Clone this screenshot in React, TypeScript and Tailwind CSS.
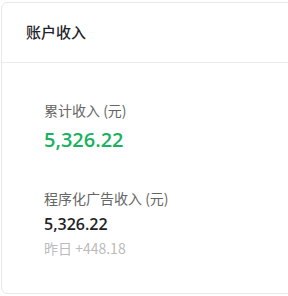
import React from 'react';

const App: React.FC = () => {
  return (
    <div className="w-[288px] h-[296px] bg-white overflow-hidden" style={{ fontFamily: '"Noto Sans CJK SC", "Liberation Sans", sans-serif' }}>
      <div className="ml-[1px] mt-[2px] w-[300px] h-[292px] border border-[#e8e8e8] rounded-md bg-white">
        {/* Header */}
        <div className="h-[60px] flex items-center pl-[24px] border-b border-[#ececec]">
          <span className="text-[15px] font-medium text-[#1f2329]">账户收入</span>
        </div>

        {/* Body */}
        <div className="pl-[42px] pt-[37px]">
          <div className="text-[14px] leading-[20px] text-[#666]">累计收入 (元)</div>
          <div className="mt-[6px] text-[20px] leading-[28px] font-semibold text-[#19b25f] font-['Open_Sans',sans-serif]">5,326.22</div>

          <div className="mt-[34px] text-[14px] leading-[20px] text-[#666]">程序化广告收入 (元)</div>
          <div className="mt-[4px] text-[16px] leading-[24px] font-semibold text-[#1f2329] font-['Open_Sans',sans-serif]">5,326.22</div>
          <div className="mt-[2px] text-[14px] leading-[20px] text-[#bbbbbb]">昨日 +448.18</div>
        </div>
      </div>
    </div>
  );
};

export default App;
